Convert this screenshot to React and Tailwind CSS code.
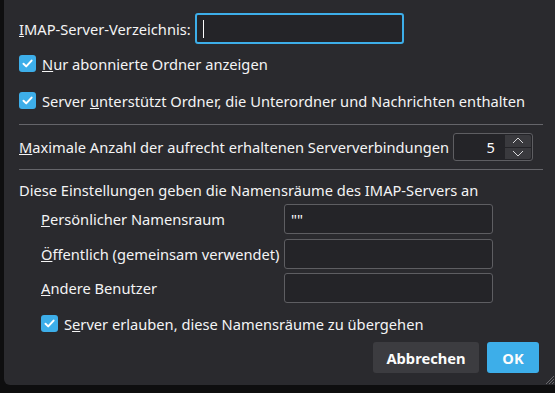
import React from 'react';

const font = { fontFamily: '"Noto Sans", "Open Sans", sans-serif' };

function Check() {
  return (
    <div className="w-[17px] h-[17px] rounded-[3px] bg-[#3daee9] flex items-center justify-center shrink-0">
      <svg width="13" height="13" viewBox="0 0 13 13">
        <path d="M2.5 6.8 L5.2 9.4 L10.6 3.6" fill="none" stroke="#ffffff" strokeWidth="2" strokeLinecap="round" strokeLinejoin="round" />
      </svg>
    </div>
  );
}

function Field({ value }) {
  return (
    <div className="w-[209px] h-[30px] rounded-[3px] border border-[#5e5e62] bg-[#242428] flex items-center px-[6px] text-[#fcfcfc]">
      {value}
    </div>
  );
}

function App() {
  return (
    <div className="w-[555px] h-[393px] bg-[#0e0e0f] overflow-hidden text-[14.67px] text-[#f4f4f5] leading-[20px]" style={font}>
      <div className="ml-[4px] w-[560px] h-[385px] bg-[#2a2a2e] rounded-bl-[6px] relative pl-[15px] flex flex-col">
        {/* IMAP dir */}
        <div className="mt-[13px] h-[31px] flex items-center">
          <span className="w-[176px]"><u>I</u>MAP-Server-Verzeichnis:</span>
          <div className="w-[209px] h-[31px] rounded-[3px] border-2 border-[#3daee9] bg-[#242428] flex items-center pl-[6px]">
            <div className="w-[1px] h-[18px] bg-[#fcfcfc]"></div>
          </div>
        </div>

        <div className="mt-[11px] h-[17px] flex items-center gap-[6px]">
          <Check />
          <span><u>N</u>ur abonnierte Ordner anzeigen</span>
        </div>

        <div className="mt-[20px] h-[17px] flex items-center gap-[6px]">
          <Check />
          <span>Server <u>u</u>nterstützt Ordner, die Unterordner und Nachrichten enthalten</span>
        </div>

        <div className="mt-[15px] w-[524px] h-[1px] bg-[#65656a]"></div>

        {/* max connections */}
        <div className="mt-[8px] h-[28px] flex items-center">
          <span className="w-[434px]"><u>M</u>aximale Anzahl der aufrecht erhaltenen Serververbindungen</span>
          <div className="w-[80px] h-[28px] rounded-[3px] border border-[#5e5e62] bg-[#242428] flex">
            <div className="flex-1 flex items-center justify-end pr-[10px] text-[#fcfcfc]">5</div>
            <div className="w-[27px] flex flex-col gap-[1px] py-[1px] pr-[1px]">
              <div className="flex-1 bg-[#3a3a3e] rounded-tr-[2px] flex items-center justify-center">
                <svg width="12" height="7" viewBox="0 0 12 7"><path d="M1 6 L6 1 L11 6" fill="none" stroke="#d8d8da" strokeWidth="1" /></svg>
              </div>
              <div className="flex-1 bg-[#3a3a3e] rounded-br-[2px] flex items-center justify-center">
                <svg width="12" height="7" viewBox="0 0 12 7"><path d="M1 1 L6 6 L11 1" fill="none" stroke="#d8d8da" strokeWidth="1" /></svg>
              </div>
            </div>
          </div>
        </div>

        <div className="mt-[8px] w-[524px] h-[1px] bg-[#65656a]"></div>

        <div className="mt-[10px] h-[20px] flex items-center">Diese Einstellungen geben die Namensräume des IMAP-Servers an</div>

        <div className="pl-[22px] flex flex-col">
          <div className="mt-[4px] flex items-center">
            <span className="w-[243px]"><u>P</u>ersönlicher Namensraum</span>
            <Field value={'""'} />
          </div>
          <div className="mt-[5px] flex items-center">
            <span className="w-[243px]"><u>Ö</u>ffentlich (gemeinsam verwendet)</span>
            <Field value="" />
          </div>
          <div className="mt-[4px] flex items-center">
            <span className="w-[243px]"><u>A</u>ndere Benutzer</span>
            <Field value="" />
          </div>
          <div className="mt-[12px] h-[17px] flex items-center gap-[6px]">
            <Check />
            <span>S<u>e</u>rver erlauben, diese Namensräume zu übergehen</span>
          </div>
        </div>

        <div className="mt-[10px] w-[520px] flex justify-end gap-[8px]">
          <div className="w-[106px] h-[31px] rounded-[3px] bg-[#3c3c40] flex items-center justify-center font-bold text-[#fcfcfc]">Abbrechen</div>
          <div className="w-[52px] h-[31px] rounded-[3px] bg-[#3daee9] flex items-center justify-center font-bold text-[#fcfcfc]">OK</div>
        </div>

        <svg className="absolute left-[540px] top-[374px]" width="11" height="11" viewBox="0 0 11 11">
          <path d="M10 2 L2 10 M10 5 L5 10 M10 8 L8 10" stroke="#6a6a6e" strokeWidth="1" />
        </svg>
      </div>
    </div>
  );
}

export default App;
